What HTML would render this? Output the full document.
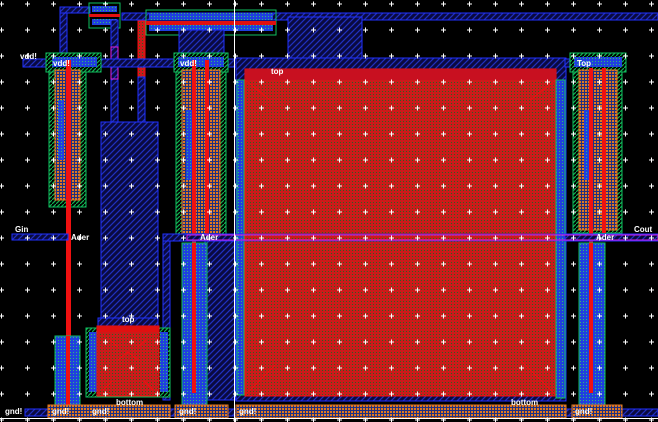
<!DOCTYPE html>
<html><head><meta charset="utf-8"><style>
html,body{margin:0;padding:0;background:#000;width:658px;height:422px;overflow:hidden}
svg{display:block}
text{font-family:"Liberation Sans",sans-serif;font-size:8px;fill:#fff;font-weight:bold}
</style></head><body>
<svg width="658" height="422" viewBox="0 0 658 422" xmlns="http://www.w3.org/2000/svg">
<defs>
<pattern id="dots" width="26" height="26" patternUnits="userSpaceOnUse" x="-2" y="1">
<path d="M1 3h5M3.5 0.5v5" stroke="#fff" stroke-width="1"/></pattern>
<pattern id="bh" width="6" height="6" patternUnits="userSpaceOnUse"><rect width="6" height="6" fill="#0a0a40"/><path d="M0 6L6 0M-1 1L1 -1M5 7L7 5" stroke="#2030c0" stroke-width="1.2"/></pattern>
<pattern id="gh" width="4" height="4" patternUnits="userSpaceOnUse"><rect width="4" height="4" fill="#000"/><path d="M0 4L4 0" stroke="#10b050" stroke-width="1.2"/></pattern>
<pattern id="rx" width="3" height="3" patternUnits="userSpaceOnUse"><rect width="3" height="3" fill="#cc1a1a"/><rect x="1" y="1" width="1" height="1" fill="#306020"/></pattern>
<pattern id="bg" width="3" height="3" patternUnits="userSpaceOnUse"><rect width="3" height="3" fill="#2040e0"/><rect x="1" y="1" width="1" height="1" fill="#30c070"/></pattern>
<pattern id="or" width="3" height="3" patternUnits="userSpaceOnUse"><rect width="3" height="3" fill="#203080"/><rect x="0" y="0" width="2" height="2" fill="#e07820"/></pattern>
</defs>
<rect width="658" height="422" fill="#000"/>

<rect x="60" y="7" width="7" height="55" fill="url(#bh)" stroke="#2030ff"/>
<rect x="60" y="7" width="30" height="6" fill="url(#bh)" stroke="#2030ff"/>
<rect x="122" y="13" width="536" height="7" fill="url(#bh)" stroke="#2030ff"/>
<rect x="89" y="3" width="31" height="25" fill="none" stroke="#10c060"/>
<rect x="92" y="6" width="25" height="6" fill="url(#bg)"/>
<rect x="92" y="19" width="25" height="6" fill="url(#bg)"/>
<rect x="89" y="14" width="31" height="3" fill="#e01010"/>
<rect x="146" y="10" width="130" height="25" fill="none" stroke="#10c060"/>
<rect x="149" y="13" width="124" height="7" fill="url(#bg)"/>
<rect x="149" y="25" width="124" height="6" fill="url(#bg)"/>
<rect x="146" y="21" width="130" height="4" fill="#e01010"/>
<rect x="179" y="30" width="45" height="30" fill="url(#bh)" stroke="#2030ff"/>
<rect x="288" y="17" width="74" height="42" fill="url(#bh)" stroke="#2030ff"/>
<rect x="138" y="21" width="7" height="56" fill="url(#rx)" stroke="#f01010"/>
<rect x="138" y="77" width="7" height="46" fill="url(#bh)" stroke="#2030ff"/>
<rect x="111" y="20" width="7" height="102" fill="url(#bh)" stroke="#2030ff"/>
<rect x="111" y="47" width="7" height="32" fill="none" stroke="#e020e0"/>

<rect x="236" y="58" width="330" height="343" fill="url(#bh)" stroke="#2030ff"/>
<rect x="245" y="69" width="311" height="327" fill="url(#rx)" stroke="#f01010"/>
<rect x="245" y="69" width="311" height="11" fill="#c81020"/>
<path d="M245 80L270 100M556 80L530 100M245 395L275 365M556 395L520 360" stroke="#f01010" stroke-width="1" fill="none"/>
<rect x="237" y="80" width="7" height="315" fill="url(#bg)" stroke="#10c060"/>
<rect x="556" y="80" width="9" height="318" fill="url(#bg)" stroke="#10c060"/>

<rect x="101" y="122" width="57" height="198" fill="url(#bh)" stroke="#2030ff"/>

<rect x="23" y="59" width="213" height="8" fill="url(#bh)" stroke="#2030ff"/>
<rect x="565" y="59" width="58" height="8" fill="url(#bh)" stroke="#2030ff"/>

<rect x="46" y="53" width="55" height="19" fill="url(#gh)" stroke="#10c060"/>
<rect x="52" y="57" width="45" height="10" fill="url(#bg)"/>
<rect x="49" y="72" width="37" height="135" fill="url(#gh)" stroke="#10c060"/>
<rect x="55" y="70" width="25" height="130" fill="url(#or)" stroke="#e07820"/>
<rect x="58" y="100" width="6" height="60" fill="url(#bg)"/>
<rect x="66" y="60" width="5" height="345" fill="#f01010"/>
<rect x="174" y="53" width="54" height="19" fill="url(#gh)" stroke="#10c060"/>
<rect x="178" y="57" width="46" height="10" fill="url(#bg)"/>
<rect x="176" y="72" width="50" height="163" fill="url(#gh)" stroke="#10c060"/>
<rect x="182" y="70" width="38" height="165" fill="url(#or)" stroke="#e07820"/>
<rect x="186" y="110" width="6" height="70" fill="url(#bg)"/>
<rect x="192" y="60" width="4" height="330" fill="#f01010"/>
<rect x="205" y="60" width="4" height="175" fill="#f01010"/>
<rect x="570" y="53" width="56" height="19" fill="url(#gh)" stroke="#10c060"/>
<rect x="574" y="57" width="48" height="10" fill="url(#bg)"/>
<rect x="573" y="72" width="49" height="161" fill="url(#gh)" stroke="#10c060"/>
<rect x="579" y="70" width="38" height="160" fill="url(#or)" stroke="#e07820"/>
<rect x="584" y="110" width="6" height="70" fill="url(#bg)"/>
<rect x="589" y="68" width="4" height="332" fill="#f01010"/>
<rect x="602" y="68" width="4" height="165" fill="#f01010"/>

<rect x="163" y="234" width="7" height="166" fill="url(#bh)" stroke="#2030ff"/>
<rect x="205" y="237" width="30" height="163" fill="url(#bh)" stroke="#2030ff"/>

<rect x="12" y="234" width="56" height="6" fill="url(#bh)" stroke="#2030ff"/>
<rect x="163" y="234" width="73" height="7" fill="url(#bh)" stroke="#2030ff"/>
<rect x="565" y="234" width="93" height="7" fill="url(#bh)" stroke="#2030ff"/>
<rect x="236" y="234" width="329" height="7" fill="none" stroke="#2030ff" stroke-opacity="0.6"/>
<rect x="187" y="235" width="471" height="5" fill="none" stroke="#e020e0"/>

<rect x="55" y="336" width="25" height="69" fill="url(#bg)" stroke="#10c060"/>
<rect x="66" y="336" width="4" height="69" fill="#f01010"/>
<rect x="182" y="243" width="25" height="162" fill="url(#bg)" stroke="#10c060"/>
<rect x="192" y="243" width="4" height="150" fill="#f01010"/>
<rect x="579" y="243" width="26" height="162" fill="url(#bg)" stroke="#10c060"/>
<rect x="589" y="243" width="4" height="150" fill="#f01010"/>

<rect x="86" y="328" width="84" height="69" fill="url(#gh)" stroke="#10c060"/>
<rect x="89" y="332" width="8" height="60" fill="url(#bg)"/>
<rect x="160" y="332" width="8" height="60" fill="url(#bg)"/>
<rect x="98" y="318" width="60" height="9" fill="url(#bh)" stroke="#2030ff"/>
<rect x="97" y="326" width="62" height="70" fill="url(#rx)" stroke="#f01010"/>
<rect x="97" y="326" width="62" height="6" fill="#e01010"/>
<path d="M110 340L118 347M146 340L138 347M118 360L128 352L138 360M103 390L112 381M153 390L144 381" stroke="#f01010" fill="none"/>

<rect x="25" y="409" width="633" height="7" fill="url(#bh)" stroke="#2030ff"/>
<rect x="48" y="405" width="122" height="13" fill="url(#or)" stroke="#e07820"/>
<rect x="175" y="405" width="53" height="13" fill="url(#or)" stroke="#e07820"/>
<rect x="236" y="405" width="330" height="13" fill="url(#or)" stroke="#e07820"/>
<rect x="572" y="405" width="50" height="13" fill="url(#or)" stroke="#e07820"/>

<rect width="658" height="422" fill="url(#dots)"/>
<rect x="234" y="0" width="1" height="422" fill="#fff"/>
<rect x="0" y="418" width="658" height="1" fill="#fff"/>

<text x="20" y="59">vdd!</text>
<text x="53" y="66">vdd!</text>
<text x="180" y="66">vdd!</text>
<text x="577" y="66">Top</text>
<text x="271" y="74">top</text>
<text x="15" y="232">Gin</text>
<text x="71" y="240">Ader</text>
<text x="200" y="240">Ader</text>
<text x="596" y="240">Ader</text>
<text x="634" y="232">Cout</text>
<text x="122" y="322">top</text>
<text x="116" y="405">bottom</text>
<text x="511" y="405">bottom</text>
<text x="5" y="414">gnd!</text>
<text x="52" y="414">gnd!</text>
<text x="92" y="414">gnd!</text>
<text x="179" y="414">gnd!</text>
<text x="239" y="414">gnd!</text>
<text x="575" y="414">gnd!</text>
</svg>
</body></html>
